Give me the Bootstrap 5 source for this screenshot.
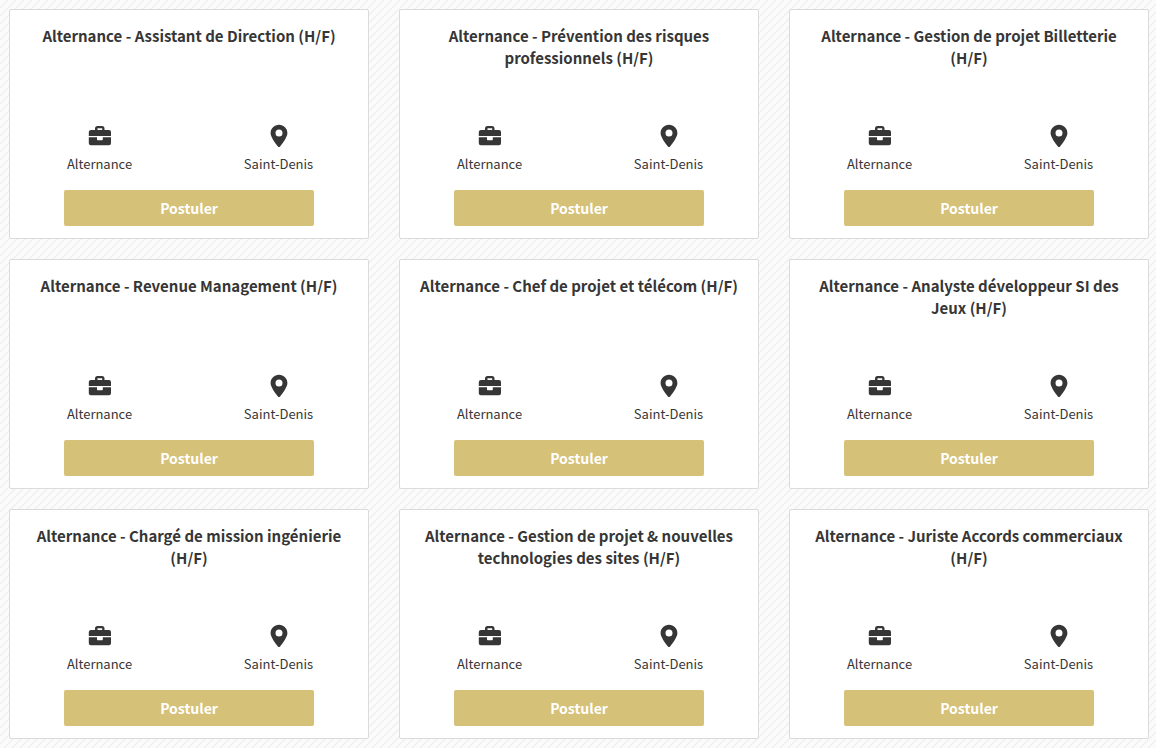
<!DOCTYPE html>
<html lang="fr">
<head>
<meta charset="utf-8">
<meta name="viewport" content="width=device-width, initial-scale=1">
<title>Offres en alternance</title>
<link href="https://cdn.jsdelivr.net/npm/bootstrap@5.3.0/dist/css/bootstrap.min.css" rel="stylesheet">
<style>
body{font-family:"Noto Sans CJK JP",sans-serif;color:#363636;background:#fbfbfb linear-gradient(135deg,#fbfbfb 40%,#efefef 50%,#fbfbfb 60%) 0 0/8px 8px}
.offers{padding:9px 7px 9px 9px}
.offers .row{--bs-gutter-x:30px;--bs-gutter-y:20px}
.offer{height:230px;border:1px solid #dbdbdb;border-radius:2px;color:#363636;padding:15px 0 12px}
.offer-title{font-size:15px;line-height:22px;font-weight:700;height:94px;padding:0 14px}
.offer-info{font-size:13px;line-height:20px}
.offer-info svg{display:block;width:24px;height:24px;margin:5px auto 6px;fill:#363636}
.btn-apply{--bs-btn-color:#fff;--bs-btn-bg:#d5c177;--bs-btn-hover-color:#fff;--bs-btn-hover-bg:#c8b264;width:250px;max-width:100%;height:36px;border:0;border-radius:2px;font-size:14px;line-height:22px;font-weight:700;padding:7px}
</style>
</head>
<body>
<svg class="d-none" aria-hidden="true">
<symbol id="case" viewBox="0 0 24 24"><path fill-rule="evenodd" d="M3 6h4V4.500Q7 2 9.500 2h4.500Q16.500 2 16.500 4.500V6H21q2 0 2 2v4H.8V8q0-2 2.200-2zM9.500 6h4.700V4.300H9.500zM.8 13.300h8.200v2.200q0 .7.700.7h4.400q.7 0 .7-.7v-2.200H23v6q0 2-2 2H2.800q-2 0-2-2z"/></symbol>
<symbol id="pin" viewBox="0 0 24 24"><path fill-rule="evenodd" d="M12 .8c-4.700 0-8.400 3.700-8.400 8.400 0 3.500 4.500 9.900 7.300 13.200q1.100 1.200 2.200 0c2.800-3.300 7.300-9.700 7.300-13.200C20.400 4.500 16.700.8 12 .8zM12 5.500a3.500 3.500 0 1 1 0 7 3.500 3.500 0 0 1 0-7z"/></symbol>
</svg>
<main class="container-fluid offers">
<div class="row row-cols-3 mt-0" id="list"></div>
</main>
<template id="offer">
<div class="col">
<article class="card offer text-center align-items-center">
<h2 class="offer-title mb-0"></h2>
<div class="row w-100 g-0 offer-info mb-auto">
<div class="col"><svg aria-hidden="true"><use href="#case"/></svg>Alternance</div>
<div class="col"><svg aria-hidden="true"><use href="#pin"/></svg>Saint-Denis</div>
</div>
<button type="button" class="btn btn-apply">Postuler</button>
</article>
</div>
</template>
<script>
const titles = [
  "Assistant de Direction", "Prévention des risques professionnels", "Gestion de projet Billetterie",
  "Revenue Management", "Chef de projet et télécom", "Analyste développeur SI des Jeux",
  "Chargé de mission ingénierie", "Gestion de projet & nouvelles technologies des sites", "Juriste Accords commerciaux"
];
const list = document.getElementById("list");
const template = document.getElementById("offer");
titles.forEach((title, i) => {
  const node = template.content.cloneNode(true);
  if (i < 3) node.querySelector(".col").classList.add("mt-0");
  node.querySelector("h2").textContent = `Alternance - ${title} (H/F)`;
  list.append(node);
});
</script>
<script src="https://cdn.jsdelivr.net/npm/bootstrap@5.3.0/dist/js/bootstrap.bundle.min.js"></script>
</body>
</html>
